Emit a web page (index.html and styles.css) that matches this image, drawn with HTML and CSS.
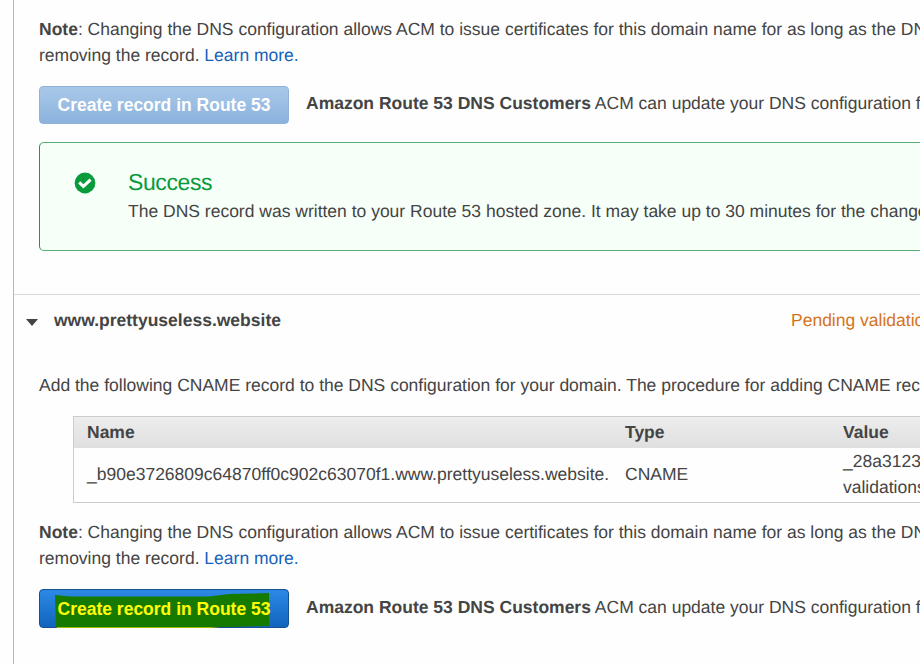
FILE: index.html
```html
<!DOCTYPE html>
<html lang="en">
<head>
<meta charset="utf-8">
<title>Certificate validation</title>
<link rel="stylesheet" href="styles.css">
</head>
<body>
<main class="panel">
  <section class="domain">
    <p class="note"><b>Note</b>: Changing the DNS configuration allows ACM to issue certificates for this domain name for as long as the DNS<br>removing the record. <a class="link">Learn more.</a></p>
    <div class="action">
      <button class="btn btn-disabled"><span class="btn-text">Create record in Route 53</span></button>
      <p class="hint"><b>Amazon Route 53 DNS Customers</b> ACM can update your DNS configuration for</p>
    </div>
    <div class="alert">
      <svg class="alert-icon" viewBox="0 0 22 22"><circle cx="11" cy="11" r="10.4" fill="#099a3c"/><path d="M5.2 10.4l4.2 4 7.2-6.8" fill="none" stroke="#fff" stroke-width="3.1"/></svg>
      <div class="alert-body">
        <h2 class="alert-title">Success</h2>
        <p class="alert-text">The DNS record was written to your Route 53 hosted zone. It may take up to 30 minutes for the changes</p>
      </div>
    </div>
  </section>
  <section class="domain domain-next">
    <header class="domain-head">
      <svg class="caret" viewBox="0 0 12 7"><path d="M0 0h12L6 7z" fill="#444"/></svg>
      <h3 class="domain-name">www.prettyuseless.website</h3>
      <span class="status">Pending validation</span>
    </header>
    <p class="intro">Add the following CNAME record to the DNS configuration for your domain. The procedure for adding CNAME records</p>
    <div class="record">
      <div class="row row-head"><span>Name</span><span>Type</span><span>Value</span></div>
      <div class="row row-body"><span>_b90e3726809c64870ff0c902c63070f1.www.prettyuseless.website.</span><span>CNAME</span><span>_28a3123<br>validations</span></div>
    </div>
    <p class="note"><b>Note</b>: Changing the DNS configuration allows ACM to issue certificates for this domain name for as long as the DNS<br>removing the record. <a class="link">Learn more.</a></p>
    <div class="action">
      <button class="btn btn-primary">
        <svg class="marker" viewBox="0 0 216 38"><path d="M1 36h175l-20 2H2z" fill="#a9b800"/><path d="M0 5L15 6.500h140L175 4l40-1v33l-40 1H1z" fill="#177a00"/></svg>
        <span class="btn-text">Create record in Route 53</span>
      </button>
      <p class="hint"><b>Amazon Route 53 DNS Customers</b> ACM can update your DNS configuration for</p>
    </div>
  </section>
</main>
</body>
</html>
```

FILE: styles.css
```css
* { box-sizing: border-box; }
body {
  margin: 0;
  height: 664px;
  overflow: hidden;
  background: #fefefe;
  color: #444;
  font: 17.5px/26px "Liberation Sans", Arial, sans-serif;
  text-rendering: geometricPrecision;
  white-space: nowrap;
}
p, h2, h3 { margin: 0; }
.panel {
  height: 664px;
  margin-left: 13px;
  border-left: 1px solid #b8b8b8;
  overflow: hidden;
}
.domain { padding-left: 25px; }
.domain:first-child { height: 294px; padding-top: 16px; }
.link { color: #1560bd; }
.action { display: flex; gap: 17px; margin-top: 18px; }
.btn {
  position: relative;
  flex: none;
  width: 250px;
  height: 39px;
  padding: 0;
  border: 1px solid;
  border-radius: 4px;
  font: bold 17.5px/36px "Liberation Sans", Arial, sans-serif;
  text-align: center;
}
.btn-disabled {
  height: 38px;
  margin-bottom: 1px;
  line-height: 35px;
  color: #fff;
  border-color: #8db3dc;
  background: linear-gradient(#a9c8e8, #8bb3de);
}
.btn-primary {
  color: #ffff08;
  border-color: #174f91;
  background: linear-gradient(#2b89e5, #1264bd);
}
.btn-text { position: relative; }
.marker {
  position: absolute;
  left: 15px;
  top: 0;
  width: 215px;
  height: 38px;
  overflow: visible;
}
.hint { padding-top: 4px; }
.domain-next .hint { padding-top: 5px; }
.alert {
  display: flex;
  width: 940px;
  height: 109px;
  margin-top: 17px;
  padding: 25px 0 0 34px;
  border: 1px solid #55b07b;
  border-left-color: #219451;
  border-radius: 5px;
  background: #f7fff9;
}
.alert-icon { flex: none; width: 22px; height: 22px; margin-top: 4px; }
.alert-body { margin-left: 32px; }
.alert-title {
  color: #099a3c;
  font-size: 23px;
  font-weight: normal;
  letter-spacing: -0.4px;
  line-height: 28px;
}
.alert-text { margin-top: 2px; }
.domain-next { border-top: 1px solid #d8d8d8; }
.domain-head { display: flex; height: 26px; margin: 12px 0 0 -14px; }
.caret { flex: none; width: 14px; height: 7px; margin-top: 12px; }
.domain-name { flex: none; width: 737px; margin-left: 15px; font-size: 17.5px; }
.status { color: #d5731b; }
.intro { margin-top: 39px; }
.record {
  width: 900px;
  height: 87px;
  margin: 18px 0 16px 34px;
  border: 1px solid #ccc;
}
.row {
  display: grid;
  grid-template-columns: 538px 218px 1fr;
  align-items: center;
  padding: 0 0 2px 13px;
}
.row-head { height: 31px; font-weight: bold; background: linear-gradient(#ededed, #dfdfdf); }
.row-body { height: 54px; }
```
